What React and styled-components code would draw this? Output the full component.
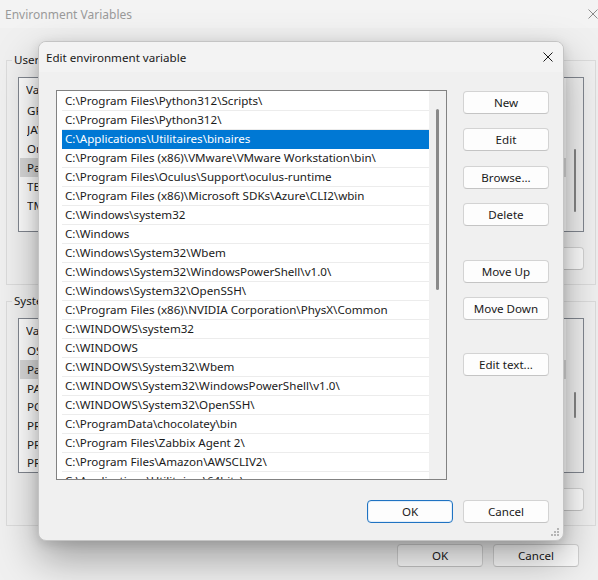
import React from "react";
import styled, { createGlobalStyle } from "styled-components";

const Global = createGlobalStyle`
  html, body { margin: 0; padding: 0; overflow: hidden; background: #f0f0f0; }
  body { font-family: "Noto Sans", "DejaVu Sans", sans-serif; font-size: 11.6px; color: #1a1a1a; }
  * { box-sizing: border-box; }
`;

const Screen = styled.div`
  position: relative;
  width: 598px;
  height: 580px;
  overflow: hidden;
`;

/* ---------- parent window (Environment Variables) ---------- */

const ParentWindow = styled.div`
  width: 606px;
  height: 580px;
  background: #f0f0f0;
  display: flex;
  flex-direction: column;
`;

const ParentTitleBar = styled.div`
  height: 28px;
  flex: none;
  display: flex;
  align-items: center;
  justify-content: space-between;
  padding: 0 8px 0 5px;
  color: #9a9a9a;
  font-size: 12px;
  background: #f3f3f3;
`;

const GroupBox = styled.fieldset`
  margin: ${(p) => p.$top}px 10px 0 6px;
  padding: 0 11px 14px 11px;
  border: 1px solid #dcdcdc;
  min-width: 0;
  display: flex;
  flex-direction: column;
`;

const GroupLegend = styled.legend`
  margin-left: -6px;
  padding: 0 2px;
  line-height: 16px;
  color: #1a1a1a;
`;

const VarList = styled.div`
  margin-top: 9px;
  height: 155px;
  border: 1px solid #828790;
  background: #fff;
  display: flex;
`;

const VarRows = styled.div`
  flex: 1;
  display: flex;
  flex-direction: column;
`;

const VarHeader = styled.div`
  height: 23px;
  display: flex;
  align-items: center;
  padding-left: 7px;
`;

const VarRow = styled.div`
  height: 19px;
  display: flex;
  align-items: center;
  padding-left: 7px;
  background: ${(p) => (p.$selected ? "#d9d9d9" : "transparent")};
  margin-left: 1px;
`;

/* only the first letters of each name show beside the dialog */
const VarName = styled.span`
  width: 12px;
  white-space: nowrap;
  overflow: hidden;
`;

const ParentScroll = styled.div`
  width: 17px;
  background: #f0f0f0;
  display: flex;
  justify-content: center;
  padding-top: ${(p) => p.$offset}px;
`;

const ParentThumb = styled.div`
  width: 2px;
  height: ${(p) => p.$h}px;
  background: #858585;
  border-radius: 1px;
`;

const ButtonRow = styled.div`
  margin-top: 15px;
  display: flex;
  justify-content: flex-end;
  gap: 10px;
`;

const ParentFooter = styled.div`
  margin-top: 18px;
  padding-right: 27px;
  display: flex;
  justify-content: flex-end;
  gap: 10px;
`;

/* ---------- buttons ---------- */

const Button = styled.button`
  width: 86px;
  height: 23px;
  flex: none;
  margin: ${(p) => (p.$gap ? `${p.$gap}px 0 0 0` : 0)};
  padding: 0;
  font-family: inherit;
  font-size: 11.6px;
  color: #1a1a1a;
  background: #fdfdfd;
  border: 1px solid ${(p) => (p.$default ? "#1f73c2" : "#d3d3d3")};
  border-bottom-color: ${(p) => (p.$default ? "#1f73c2" : "#c4c4c4")};
  border-radius: 4px;
  box-shadow: ${(p) => (p.$default ? "inset 0 0 0 1px #e3eef9" : "none")};
  display: flex;
  align-items: center;
  justify-content: center;
`;

/* ---------- dialog ---------- */

const Dialog = styled.div`
  position: absolute;
  left: 38px;
  top: 41px;
  width: 526px;
  border: 1px solid #c4c4c4;
  border-radius: 8px;
  background: #f0f0f0;
  box-shadow: 0 18px 42px rgba(0, 0, 0, 0.34), 0 3px 12px rgba(0, 0, 0, 0.12);
  display: flex;
  flex-direction: column;
  overflow: hidden;
`;

const DialogTitleBar = styled.div`
  height: 30px;
  display: flex;
  align-items: center;
  justify-content: space-between;
  padding: 0 10px 0 7px;
  background: #f3f3f3;
  color: #1a1a1a;
`;

const DialogBody = styled.div`
  padding: 18px 14px 17px 17px;
  display: flex;
  flex-direction: column;
  position: relative;
`;

const MainRow = styled.div`
  display: flex;
  gap: 16px;
`;

const PathList = styled.div`
  width: 391px;
  height: 390px;
  border: 1px solid #828282;
  background: #fff;
  display: flex;
  overflow: hidden;
`;

const PathRows = styled.div`
  flex: 1;
  padding: 1px 0 0 5px;
  display: flex;
  flex-direction: column;
  overflow: hidden;
`;

const PathRow = styled.div`
  height: 19px;
  flex: none;
  display: flex;
  align-items: center;
  padding: 0 0 1px 3px;
  border-bottom: 1px solid ${(p) => (p.$selected ? "#0078d4" : "#ececec")};
  background: ${(p) => (p.$selected ? "#0078d4" : "transparent")};
  color: ${(p) => (p.$selected ? "#ffffff" : "#1a1a1a")};
  white-space: nowrap;
`;

const ScrollTrack = styled.div`
  width: 17px;
  flex: none;
  background: #f0f0f0;
  display: flex;
  justify-content: center;
  padding-top: 18px;
`;

const ScrollThumb = styled.div`
  width: 3px;
  height: 181px;
  border-radius: 2px;
  background: #8a8a8a;
`;

const ButtonColumn = styled.div`
  width: 86px;
  padding-top: 1px;
  display: flex;
  flex-direction: column;
`;

const DialogFooter = styled.div`
  margin-top: 20px;
  display: flex;
  justify-content: flex-end;
  gap: 10px;
`;

const Grip = styled.svg`
  position: absolute;
  right: 3px;
  bottom: 3px;
`;

const CloseIcon = ({ color = "#1a1a1a", size = 10 }) => (
  <svg width={size} height={size} viewBox="0 0 10 10">
    <path d="M0.5 0.5 L9.5 9.5 M9.5 0.5 L0.5 9.5" stroke={color} strokeWidth="1" fill="none" />
  </svg>
);

const userVars = ["GRADLE_HOME", "JAVA_HOME", "OneDrive", "Path", "TEMP", "TMP"];

const systemVars = [
  "OS",
  "Path",
  "PATHEXT",
  "POWERSHELL_DISTRIBUTION_CHANNEL",
  "PROCESSOR_ARCHITECTURE",
  "PROCESSOR_IDENTIFIER",
  "PROCESSOR_LEVEL",
];

const paths = [
  "C:\\Program Files\\Python312\\Scripts\\",
  "C:\\Program Files\\Python312\\",
  "C:\\Applications\\Utilitaires\\binaires",
  "C:\\Program Files (x86)\\VMware\\VMware Workstation\\bin\\",
  "C:\\Program Files\\Oculus\\Support\\oculus-runtime",
  "C:\\Program Files (x86)\\Microsoft SDKs\\Azure\\CLI2\\wbin",
  "C:\\Windows\\system32",
  "C:\\Windows",
  "C:\\Windows\\System32\\Wbem",
  "C:\\Windows\\System32\\WindowsPowerShell\\v1.0\\",
  "C:\\Windows\\System32\\OpenSSH\\",
  "C:\\Program Files (x86)\\NVIDIA Corporation\\PhysX\\Common",
  "C:\\WINDOWS\\system32",
  "C:\\WINDOWS",
  "C:\\WINDOWS\\System32\\Wbem",
  "C:\\WINDOWS\\System32\\WindowsPowerShell\\v1.0\\",
  "C:\\WINDOWS\\System32\\OpenSSH\\",
  "C:\\ProgramData\\chocolatey\\bin",
  "C:\\Program Files\\Zabbix Agent 2\\",
  "C:\\Program Files\\Amazon\\AWSCLIV2\\",
  "C:\\Applications\\Utilitaires\\64bits\\",
];

const sideButtons = [
  ["New", 0],
  ["Edit", 14],
  ["Browse...", 15],
  ["Delete", 14],
  ["Move Up", 34],
  ["Move Down", 14],
  ["Edit text...", 33],
];

function VarPanel({ rows, selected, thumbOffset, thumbHeight }) {
  return (
    <VarList>
      <VarRows>
        <VarHeader>
          <VarName>Variable</VarName>
        </VarHeader>
        {rows.map((n) => (
          <VarRow key={n} $selected={n === selected}>
            <VarName>{n}</VarName>
          </VarRow>
        ))}
      </VarRows>
      <ParentScroll $offset={thumbOffset}>
        <ParentThumb $h={thumbHeight} />
      </ParentScroll>
    </VarList>
  );
}

export default function App() {
  return (
    <>
      <Global />
      <Screen>
        <ParentWindow>
          <ParentTitleBar>
            <span>Environment Variables</span>
            <CloseIcon color="#8a8a8a" />
          </ParentTitleBar>
          <GroupBox $top={24}>
            <GroupLegend>User</GroupLegend>
            <VarPanel rows={userVars} selected="Path" thumbOffset={71} thumbHeight={63} />
            <ButtonRow>
              <Button />
            </ButtonRow>
          </GroupBox>
          <GroupBox $top={8}>
            <GroupLegend>System</GroupLegend>
            <VarPanel rows={systemVars} selected="Path" thumbOffset={73} thumbHeight={26} />
            <ButtonRow>
              <Button />
            </ButtonRow>
          </GroupBox>
          <ParentFooter>
            <Button>OK</Button>
            <Button>Cancel</Button>
          </ParentFooter>
        </ParentWindow>

        <Dialog>
          <DialogTitleBar>
            <span>Edit environment variable</span>
            <CloseIcon />
          </DialogTitleBar>
          <DialogBody>
            <MainRow>
              <PathList>
                <PathRows>
                  {paths.map((p, i) => (
                    <PathRow key={i} $selected={i === 2}>
                      {p}
                    </PathRow>
                  ))}
                </PathRows>
                <ScrollTrack>
                  <ScrollThumb />
                </ScrollTrack>
              </PathList>
              <ButtonColumn>
                {sideButtons.map(([label, gap]) => (
                  <Button key={label} $gap={gap}>
                    {label}
                  </Button>
                ))}
              </ButtonColumn>
            </MainRow>
            <DialogFooter>
              <Button $default>OK</Button>
              <Button>Cancel</Button>
            </DialogFooter>
            <Grip width="10" height="10" viewBox="0 0 10 10">
              {[
                [8, 2],
                [5, 5],
                [8, 5],
                [2, 8],
                [5, 8],
                [8, 8],
              ].map(([x, y]) => (
                <rect key={`${x}-${y}`} x={x - 1} y={y - 1} width="2" height="2" fill="#b5b5b5" />
              ))}
            </Grip>
          </DialogBody>
        </Dialog>
      </Screen>
    </>
  );
}
